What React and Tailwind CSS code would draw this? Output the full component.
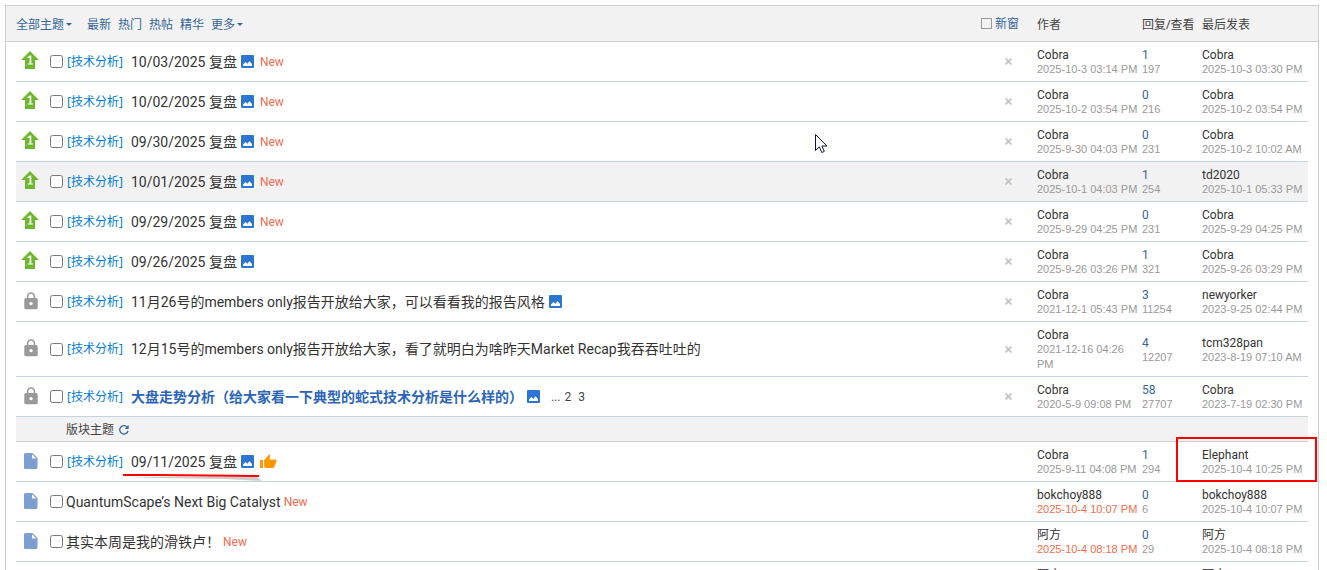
import React from "react";

const PINNED = [
  ["up", "10/03/2025 复盘", ["img", "new"], "Cobra", "2025-10-3 03:14 PM", "1", "197", "Cobra", "2025-10-3 03:30 PM"],
  ["up", "10/02/2025 复盘", ["img", "new"], "Cobra", "2025-10-2 03:54 PM", "0", "216", "Cobra", "2025-10-2 03:54 PM"],
  ["up", "09/30/2025 复盘", ["img", "new"], "Cobra", "2025-9-30 04:03 PM", "0", "231", "Cobra", "2025-10-2 10:02 AM"],
  ["up", "10/01/2025 复盘", ["img", "new"], "Cobra", "2025-10-1 04:03 PM", "1", "254", "td2020", "2025-10-1 05:33 PM"],
  ["up", "09/29/2025 复盘", ["img", "new"], "Cobra", "2025-9-29 04:25 PM", "0", "231", "Cobra", "2025-9-29 04:25 PM"],
  ["up", "09/26/2025 复盘", ["img"], "Cobra", "2025-9-26 03:26 PM", "1", "321", "Cobra", "2025-9-26 03:29 PM"],
  ["lock", "11月26号的members only报告开放给大家，可以看看我的报告风格", ["img"], "Cobra", "2021-12-1 05:43 PM", "3", "11254", "newyorker", "2023-9-25 02:44 PM"],
  ["lock", "12月15号的members only报告开放给大家，看了就明白为啥昨天Market Recap我吞吞吐吐的", [], "Cobra", "2021-12-16 04:26 PM", "4", "12207", "tcm328pan", "2023-8-19 07:10 AM"],
  ["lock", "大盘走势分析（给大家看一下典型的蛇式技术分析是什么样的）", ["img", "pages"], "Cobra", "2020-5-9 09:08 PM", "58", "27707", "Cobra", "2023-7-19 02:30 PM"],
].map((r, i) => toThread(r, { tag: true, pinned: true, hover: i === 3, bold: i === 8 }));

const NORMAL = [
  toThread(["doc", "09/11/2025 复盘", ["img", "thumb"], "Cobra", "2025-9-11 04:08 PM", "1", "294", "Elephant", "2025-10-4 10:25 PM"], { tag: true, marked: true }),
  toThread(["doc", "QuantumScape’s Next Big Catalyst", ["new"], "bokchoy888", "2025-10-4 10:07 PM", "0", "6", "bokchoy888", "2025-10-4 10:07 PM"], { fresh: true }),
  toThread(["doc", "其实本周是我的滑铁卢！", ["new"], "阿方", "2025-10-4 08:18 PM", "0", "29", "阿方", "2025-10-4 08:18 PM"], { fresh: true }),
];

function toThread([icon, title, extras, author, date, replies, views, last, lastDate], flags) {
  return { icon, title, extras, author, date, replies, views, last, lastDate, ...flags };
}

function StatusIcon({ kind }) {
  if (kind === "up")
    return (
      <svg width="18" height="18" viewBox="0 0 18 18" className="mb-[2px] ml-[5px] block" aria-hidden="true">
        <path d="M9 0L18 9H14V18H4V9H0Z" fill="#6db82f" />
        <path d="M6.5 6L9 4.600H10.300V12.500H12V13.500H6.600V12.500H8.600V6.600L6.500 7.200Z" fill="#fff" />
      </svg>
    );
  if (kind === "lock")
    return (
      <svg width="14" height="18" viewBox="0 0 14 18" className="ml-2 block" aria-hidden="true">
        <path d="M3.600 7V4.400a3.400 3.400 0 0 1 6.800 0V7" fill="none" stroke="#999" strokeWidth="1.600" />
        <rect x="0.300" y="6" width="13.400" height="11.300" rx="1.500" fill="#999" />
        <circle cx="7" cy="11.600" r="1.700" fill="#fff" />
      </svg>
    );
  return (
    <svg width="14" height="18" viewBox="0 0 14 18" className="ml-2 block" aria-hidden="true">
      <path d="M1.500 1H8.500L13.500 6V15.500a1.500 1.500 0 0 1-1.500 1.500H1.500A1.500 1.500 0 0 1 0 15.500V2.500A1.500 1.500 0 0 1 1.500 1Z" fill="#7d9fd0" />
      <path d="M8 2.300V6.500H12.300Z" fill="#fff" />
    </svg>
  );
}

function ImageIcon() {
  return (
    <svg width="13" height="13" viewBox="0 0 13 13" className="ml-1 shrink-0" role="img" aria-label="图片附件">
      <rect width="13" height="13" rx="1" fill="#2b76d0" />
      <path d="M2 11V9.500L4.500 7L6.300 8.700L8.500 6.200L11 9V11Z" fill="#fff" />
    </svg>
  );
}

function ThumbIcon() {
  return (
    <svg width="17" height="15" viewBox="0 0 17 15" className="ml-[6px] shrink-0" role="img" aria-label="推荐">
      <path d="M0 6H3V14H0Z" fill="#ff9800" />
      <path d="M4.200 6L9.200 0.500L10.200 1.500V2L9.400 5.500H15a1.500 1.500 0 0 1 1.400 2L14.300 13a1.600 1.600 0 0 1-1.500 1H6a1.800 1.800 0 0 1-1.800-1.800Z" fill="#ff9800" />
    </svg>
  );
}

function Caret() {
  return (
    <svg width="6" height="3" viewBox="0 0 6 3" className="ml-[2px]" aria-hidden="true">
      <path d="M0 0H6L3 3Z" fill="#369" />
    </svg>
  );
}

function Columns() {
  return (
    <colgroup>
      <col className="w-[34px]" />
      <col className="w-4" />
      <col />
      <col className="w-[57px]" />
      <col className="w-[105px]" />
      <col className="w-[60px]" />
      <col className="w-[106px]" />
    </colgroup>
  );
}

function ThreadRow({ t }) {
  const bg = t.hover ? "bg-[#f2f2f2]" : "bg-white";
  return (
    <tr className={`border-b border-[#c2d5e3] ${bg}`}>
      <td className="p-0 pb-[2px]"><StatusIcon kind={t.icon} /></td>
      <td className="p-0">
        <input type="checkbox" aria-label={t.title} className="block size-[13px]" />
      </td>
      <td className="p-0">
        <div className="flex items-center leading-5">
          {t.tag && (
            <a href="#tag" className="mr-2 pl-px font-['Noto_Sans','Noto_Sans_CJK_SC',sans-serif] text-xs leading-5 text-[#007cd5]">[技术分析]</a>
          )}
          <span className="relative">
            <a href="#thread" className={t.bold ? "text-sm font-bold text-[#2b65b7]" : "text-sm text-[#333]"}>{t.title}</a>
            {t.marked && (
              <svg width="140" height="8" viewBox="0 0 140 8" className="absolute -left-2 top-[22px]" aria-hidden="true">
                <path d="M3 3L36 4L104 5L139 7L134 3Z" fill="#000" opacity="0.200" />
                <path d="M0 1L34 1L136 2" stroke="#f00" strokeWidth="2" fill="none" />
              </svg>
            )}
          </span>
          {t.extras.includes("img") && <ImageIcon />}
          {t.extras.includes("new") && <a href="#new" className={t.tag ? "ml-[6px] text-xs text-[#f26c4f]" : "ml-[3px] text-xs text-[#f26c4f]"}>New</a>}
          {t.extras.includes("thumb") && <ThumbIcon />}
          {t.extras.includes("pages") && (
            <span className="ml-[11px] flex gap-x-1 text-xs text-[#444]">
              <span>...</span>
              <a href="#p2">2</a>
              <a href="#p3" className="ml-[3px]">3</a>
            </span>
          )}
        </div>
      </td>
      <td className="p-0">
        {t.pinned && (
          <button type="button" aria-label="隐藏置顶帖" className="mx-auto block">
            <svg width="7" height="7" viewBox="0 0 7 7" className="block">
              <path d="M0.500 0.500L6.500 6.500M6.500 0.500L0.500 6.500" stroke="#c4c4c4" strokeWidth="1.800" />
            </svg>
          </button>
        )}
      </td>
      <td className="p-0 pb-1 pt-[7px]">
        <a href="#author" className="block text-xs leading-[13px] text-[#333]">{t.author}</a>
        <span className={`block font-[Liberation_Sans] text-[11px] leading-[15px] ${t.fresh ? "text-[#f26c4f]" : "text-[#999]"}`}>{t.date}</span>
      </td>
      <td className="p-0 pb-1 pt-[7px]">
        <a href="#replies" className="block text-xs leading-[13px] text-[#369]">{t.replies}</a>
        <span className="block font-[Liberation_Sans] text-[11px] leading-[15px] text-[#999]">{t.views}</span>
      </td>
      <td className="relative p-0 pb-1 pt-[7px]">
        <a href="#last" className="block text-xs leading-[13px] text-[#333]">{t.last}</a>
        <a href="#post" className="block whitespace-nowrap font-[Liberation_Sans] text-[11px] leading-[15px] text-[#999]">{t.lastDate}</a>
        {t.marked && <span className="pointer-events-none absolute -bottom-px -left-[26px] -right-[9px] -top-[5px] border-2 border-[#f00]" />}
      </td>
    </tr>
  );
}

export default function App() {
  return (
    <div className="relative h-screen overflow-hidden bg-white pl-[5px] pr-2 pt-[5px] font-['Roboto','Noto_Sans_CJK_SC',sans-serif]">
      <main className="border border-[#cdcdcd]">
        <div className="border-b border-[#cdcdcd] bg-[#f2f2f2] px-[10px]">
          <table className="w-full table-fixed border-collapse text-left font-['Noto_Sans','Noto_Sans_CJK_SC',sans-serif] text-xs text-[#444]">
            <Columns />
            <thead>
              <tr className="h-[35px]">
                <th colSpan={3} className="p-0 pt-[2px] font-normal">
                  <nav className="flex items-center gap-[7px] text-[#369]">
                    <a href="#all" className="mr-2 flex items-center">全部主题<Caret /></a>
                    <a href="#latest">最新</a>
                    <a href="#hot">热门</a>
                    <a href="#heat">热帖</a>
                    <a href="#digest">精华</a>
                    <a href="#more" className="flex items-center">更多<Caret /></a>
                  </nav>
                </th>
                <th className="p-0 pl-px font-normal">
                  <label className="flex items-center gap-[3px] text-[#369]">
                    <input type="checkbox" className="size-[11px] appearance-none border border-[#999]" />
                    新窗
                  </label>
                </th>
                <th className="p-0 pt-[2px] font-normal">作者</th>
                <th className="whitespace-nowrap p-0 pt-[2px] font-normal">回复/查看</th>
                <th className="p-0 pt-[2px] font-normal">最后发表</th>
              </tr>
            </thead>
          </table>
        </div>
        <div className="px-[10px]">
          <table className="w-full table-fixed border-collapse">
            <Columns />
            <tbody>
              {PINNED.map((t) => <ThreadRow key={t.title} t={t} />)}
              <tr className="h-[25px] border-b border-[#cdcdcd] bg-[#f2f2f2]">
                <td colSpan={2} className="p-0" />
                <td colSpan={5} className="p-0 pt-px text-xs text-[#444]">
                  <div className="flex items-center gap-[5px]">
                    版块主题
                    <button type="button" aria-label="刷新">
                      <svg width="10" height="10" viewBox="0 0 10 10" className="block">
                        <path d="M8.300 2.300A4.200 4.200 0 1 0 9 6" fill="none" stroke="#369" strokeWidth="1.300" />
                        <path d="M9.700 0V4H5.700Z" fill="#369" />
                      </svg>
                    </button>
                  </div>
                </td>
              </tr>
              {NORMAL.map((t) => <ThreadRow key={t.title} t={t} />)}
              <tr className="text-xs leading-[13px] text-[#333]">
                <td colSpan={4} className="p-0" />
                <td className="px-0 pb-5 pt-[7px]">阿方</td>
                <td className="p-0" />
                <td className="px-0 pb-5 pt-[7px]">阿方</td>
              </tr>
            </tbody>
          </table>
        </div>
      </main>
      <svg width="13" height="20" viewBox="0 0 13 20" className="pointer-events-none absolute left-[815px] top-[134px]" aria-hidden="true">
        <path d="M0.500 0.500V16.500L4.300 12.900L6.800 18.500L9.300 17.400L6.900 12H12Z" fill="#fff" stroke="#111827" strokeWidth="1" />
      </svg>
    </div>
  );
}
